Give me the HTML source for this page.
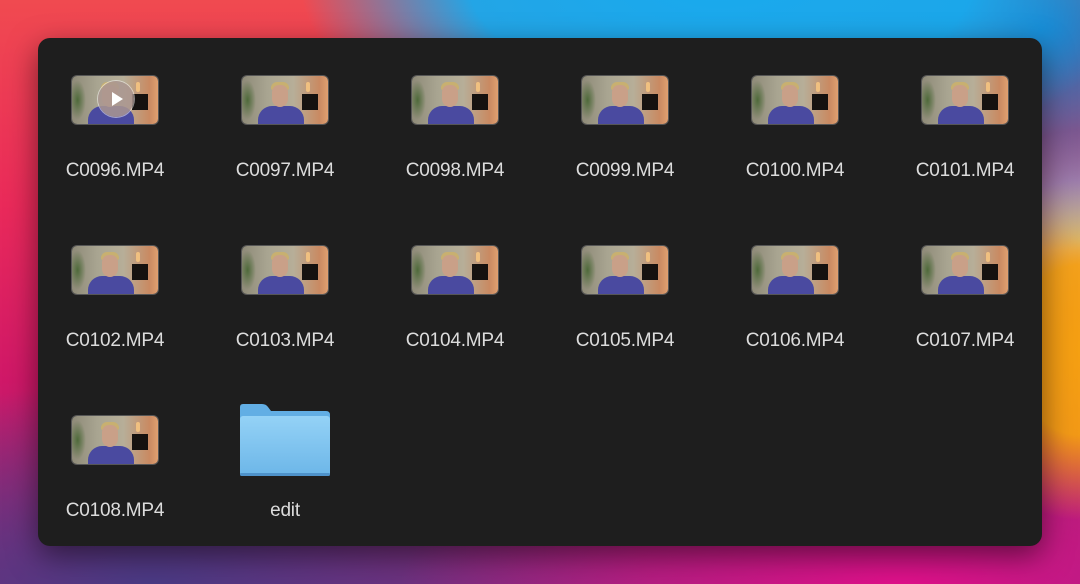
<!DOCTYPE html>
<html><head><meta charset="utf-8"><style>
html,body{margin:0;padding:0}
body{width:1080px;height:584px;overflow:hidden;position:relative;font-family:"Liberation Sans",sans-serif;
background:
radial-gradient(ellipse 420px 200px at 720px -20px,#18aaee 0%,rgba(24,170,238,0.95) 60%,rgba(24,170,238,0) 100%),
radial-gradient(ellipse 300px 220px at 1040px 30px,#1676c4 0%,rgba(22,118,196,0) 100%),
radial-gradient(ellipse 130px 170px at 1080px 350px,#f5a012 0%,rgba(245,160,18,0.95) 50%,rgba(245,160,18,0) 100%),
radial-gradient(ellipse 110px 110px at 1080px 240px,#c0def4 0%,rgba(192,222,244,0) 100%),
radial-gradient(ellipse 500px 160px at 900px 584px,#e0108a 0%,rgba(224,16,138,0) 100%),
radial-gradient(ellipse 500px 200px at 150px 584px,#4a3a84 0%,rgba(74,58,132,0) 100%),
linear-gradient(180deg,#f04a50 0%,#ea2a5a 35%,#d01868 65%,#8a2a7a 100%);}
.win{position:absolute;left:38px;top:38px;width:1004px;height:508px;background:#1e1e1e;border-radius:12px;box-shadow:0 10px 30px rgba(0,0,0,.5)}
.item{position:absolute;width:170px;text-align:center}
.lab{position:absolute;left:0;width:170px;text-align:center;color:#dcdcdc;font-size:19px;top:84px;letter-spacing:-0.2px}
.th{position:absolute;left:42px;top:0;width:86px;height:48px;border-radius:5px;overflow:hidden;
background:linear-gradient(90deg,#8e8a78 0%,#a9a591 30%,#b7ae98 60%,#c98a62 90%,#e0a070 100%);box-shadow:0 0 0 1px rgba(255,255,255,.25)}
.th .pl{position:absolute;left:0;top:4px;width:14px;height:40px;background:radial-gradient(ellipse at 40% 50%,#4e6a3a 0%,rgba(78,106,58,0) 70%)}
.th .sc{position:absolute;left:60px;top:18px;width:16px;height:16px;background:#151210}
.th .lamp{position:absolute;left:64px;top:6px;width:4px;height:10px;background:#f0c080;border-radius:2px}
.th .sh{position:absolute;left:16px;top:30px;width:46px;height:24px;background:#4a4aa0;border-radius:14px 14px 0 0}
.th .fa{position:absolute;left:30px;top:9px;width:16px;height:22px;background:#c9a088;border-radius:8px 8px 9px 9px}
.th .ha{position:absolute;left:29px;top:6px;width:18px;height:8px;background:#c8b070;border-radius:9px 9px 3px 3px}
.play{position:absolute;left:26px;top:5px;width:36px;height:36px;border-radius:50%;background:rgba(170,150,145,.85);box-shadow:0 0 0 1px rgba(255,255,255,.5)}
.play:after{content:"";position:absolute;left:14px;top:11px;border-left:11px solid #fff;border-top:7px solid transparent;border-bottom:7px solid transparent}
</style></head><body>
<div class="win"></div>

<div class="item" style="left:30px;top:76px"><div class="th"><div class="pl"></div><div class="lamp"></div><div class="sc"></div><div class="sh"></div><div class="ha"></div><div class="fa"></div><div class="play"></div></div><div class="lab">C0096.MP4</div></div>
<div class="item" style="left:200px;top:76px"><div class="th"><div class="pl"></div><div class="lamp"></div><div class="sc"></div><div class="sh"></div><div class="ha"></div><div class="fa"></div></div><div class="lab">C0097.MP4</div></div>
<div class="item" style="left:370px;top:76px"><div class="th"><div class="pl"></div><div class="lamp"></div><div class="sc"></div><div class="sh"></div><div class="ha"></div><div class="fa"></div></div><div class="lab">C0098.MP4</div></div>
<div class="item" style="left:540px;top:76px"><div class="th"><div class="pl"></div><div class="lamp"></div><div class="sc"></div><div class="sh"></div><div class="ha"></div><div class="fa"></div></div><div class="lab">C0099.MP4</div></div>
<div class="item" style="left:710px;top:76px"><div class="th"><div class="pl"></div><div class="lamp"></div><div class="sc"></div><div class="sh"></div><div class="ha"></div><div class="fa"></div></div><div class="lab">C0100.MP4</div></div>
<div class="item" style="left:880px;top:76px"><div class="th"><div class="pl"></div><div class="lamp"></div><div class="sc"></div><div class="sh"></div><div class="ha"></div><div class="fa"></div></div><div class="lab">C0101.MP4</div></div>

<div class="item" style="left:30px;top:246px"><div class="th"><div class="pl"></div><div class="lamp"></div><div class="sc"></div><div class="sh"></div><div class="ha"></div><div class="fa"></div></div><div class="lab">C0102.MP4</div></div>
<div class="item" style="left:200px;top:246px"><div class="th"><div class="pl"></div><div class="lamp"></div><div class="sc"></div><div class="sh"></div><div class="ha"></div><div class="fa"></div></div><div class="lab">C0103.MP4</div></div>
<div class="item" style="left:370px;top:246px"><div class="th"><div class="pl"></div><div class="lamp"></div><div class="sc"></div><div class="sh"></div><div class="ha"></div><div class="fa"></div></div><div class="lab">C0104.MP4</div></div>
<div class="item" style="left:540px;top:246px"><div class="th"><div class="pl"></div><div class="lamp"></div><div class="sc"></div><div class="sh"></div><div class="ha"></div><div class="fa"></div></div><div class="lab">C0105.MP4</div></div>
<div class="item" style="left:710px;top:246px"><div class="th"><div class="pl"></div><div class="lamp"></div><div class="sc"></div><div class="sh"></div><div class="ha"></div><div class="fa"></div></div><div class="lab">C0106.MP4</div></div>
<div class="item" style="left:880px;top:246px"><div class="th"><div class="pl"></div><div class="lamp"></div><div class="sc"></div><div class="sh"></div><div class="ha"></div><div class="fa"></div></div><div class="lab">C0107.MP4</div></div>

<div class="item" style="left:30px;top:416px"><div class="th"><div class="pl"></div><div class="lamp"></div><div class="sc"></div><div class="sh"></div><div class="ha"></div><div class="fa"></div></div><div class="lab">C0108.MP4</div></div>
<div class="item" style="left:200px;top:416px">
<svg style="position:absolute;left:40px;top:-12px" width="90" height="72" viewBox="0 0 90 72">
<defs><linearGradient id="g" x1="0" y1="0" x2="0" y2="1"><stop offset="0" stop-color="#94d2f6"/><stop offset="1" stop-color="#6cb6e8"/></linearGradient></defs>
<path d="M3 0 H22 Q26 0 28 3 L31 7 H86 Q90 7 90 11 V20 H0 V3 Q0 0 3 0Z" fill="#62aee4"/>
<rect x="0" y="12" width="90" height="60" rx="3" fill="url(#g)"/>
<rect x="0" y="69" width="90" height="3" rx="1.5" fill="#4e92ca"/>
</svg>
<div class="lab">edit</div></div>
</body></html>
